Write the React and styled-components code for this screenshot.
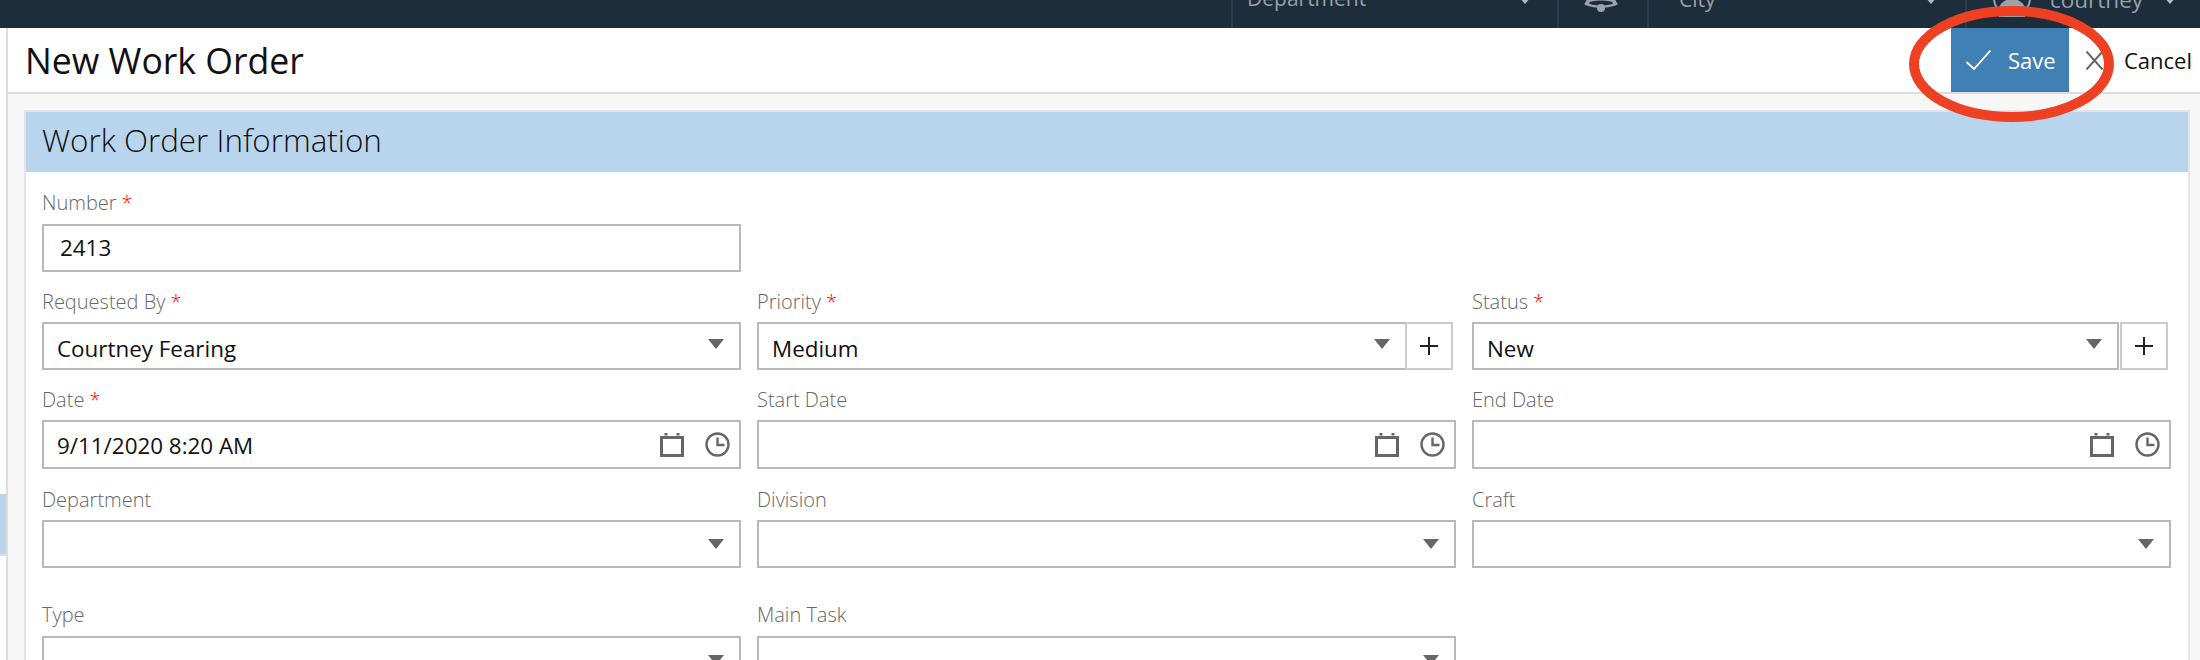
import React from "react";
import styled, { createGlobalStyle } from "styled-components";

const Global = createGlobalStyle`
  html, body { margin: 0; padding: 0; height: 660px; overflow: hidden; background: #f7f7f7; }
  body { font-family: "Open Sans", "Liberation Sans", sans-serif; }
  * { box-sizing: border-box; }
`;

const Page = styled.div`
  position: relative;
  width: 2200px;
  height: 660px;
  overflow: hidden;
  display: flex;
  flex-direction: column;
`;

const TopBar = styled.header`
  height: 28px;
  flex: none;
  background: #1e2d3b;
  overflow: hidden;
`;

const TopRow = styled.div`
  display: flex;
  justify-content: flex-end;
  height: 60px;
  margin-top: -32px;
`;

const TopCell = styled.div`
  width: ${(p) => p.$w}px;
  padding-left: ${(p) => p.$pad}px;
  border-left: 2px solid #2a3b4b;
  display: flex;
  align-items: center;
  color: #98a1a9;
  font-size: ${(p) => p.$fs || 21}px;
  position: relative;
`;

const TopText = styled.span`
  line-height: 28px;
  margin-top: ${(p) => p.$mt || 0}px;
`;

const TopCaret = styled.span`
  margin-left: auto;
  margin-right: ${(p) => p.$mr}px;
  margin-top: 4px;
  width: 0;
  height: 0;
  border-left: 6px solid transparent;
  border-right: 6px solid transparent;
  border-top: 7px solid #b5bbc1;
`;

const BellIcon = styled.svg`
  display: block;
  margin-top: 14px;
`;

const AvatarIcon = styled.svg`
  display: block;
  margin-right: 19px;
  margin-top: 0;
`;

const Body = styled.div`
  flex: 1;
  display: flex;
  min-height: 0;
`;

const Rail = styled.aside`
  width: 8px;
  flex: none;
  background: #fff;
  border-right: 2px solid #ddd;
  padding-top: 466px;
`;

const RailMark = styled.div`
  height: 62px;
  background: #b9d5ee;
  border-bottom: 2px solid #ddd;
`;

const Main = styled.main`
  flex: 1;
  min-width: 0;
  display: flex;
  flex-direction: column;
`;

const PageHead = styled.div`
  height: 66px;
  flex: none;
  background: #fff;
  border-bottom: 2px solid #ddd;
  padding: 0 8px 0 17px;
  display: flex;
  align-items: stretch;
`;

const PageTitle = styled.h1`
  margin: 0;
  flex: 1;
  font-size: 35.6px;
  font-weight: 400;
  line-height: 64px;
  color: #111;
`;

const SaveButton = styled.button`
  width: 118px;
  height: 64px;
  border: 0;
  padding: 0 0 0 15px;
  background: #4080b5;
  color: #fff;
  font: 400 22px "Open Sans", sans-serif;
  display: flex;
  align-items: center;
  gap: 17px;
`;

const CancelButton = styled.button`
  height: 64px;
  border: 0;
  padding: 0 0 0 17px;
  background: transparent;
  color: #111;
  font: 400 22px "Open Sans", sans-serif;
  display: flex;
  align-items: center;
  gap: 21px;
`;

const Content = styled.div`
  flex: 1;
  min-height: 0;
  padding: 16px 10px 0 16px;
  background: #f7f7f7;
`;

const Panel = styled.section`
  height: 100%;
  background: #fff;
  border: 2px solid #e3e3ea;
  border-bottom: 0;
`;

const PanelHead = styled.h2`
  margin: 0;
  height: 60px;
  background: #b9d5ee;
  padding-left: 16px;
  font-size: 31.4px;
  font-weight: 300;
  line-height: 56px;
  color: #111;
`;

const Form = styled.div`
  padding: 2px 15px 0 16px;
`;

const Row = styled.div`
  display: grid;
  grid-template-columns: repeat(3, 699px);
  column-gap: 16px;
  margin-bottom: ${(p) => p.$mb || 0}px;
`;

const Field = styled.div`
  min-width: 0;
`;

const Label = styled.label`
  display: block;
  height: 50px;
  padding-top: ${(p) => p.$pt || 16}px;
  font-size: 20px;
  font-weight: 300;
  line-height: 27px;
  color: #666;
`;

const Req = styled.span`
  color: #f00;
  margin-left: 5px;
`;

const Box = styled.div`
  height: ${(p) => p.$h || 48}px;
  flex: 1;
  min-width: 0;
  border: 2px solid #b9b9b9;
  background: #fff;
  display: flex;
  align-items: ${(p) => (p.$select ? "flex-start" : "center")};
  padding: 0 ${(p) => p.$pr ?? 15}px 0 ${(p) => p.$pl ?? 13}px;
  font-size: 22.4px;
  color: #111;
`;

const Value = styled.span`
  line-height: 30px;
  margin-top: ${(p) => p.$mt || 0}px;
  white-space: nowrap;
`;

const Caret = styled.span`
  margin: ${(p) => p.$mt}px 0 0 auto;
  width: 0;
  height: 0;
  flex: none;
  border-left: 8px solid transparent;
  border-right: 8px solid transparent;
  border-top: 10px solid #666;
`;

const Group = styled.div`
  display: flex;
  width: ${(p) => p.$w}px;
  gap: ${(p) => p.$gap || 0}px;
`;

const PlusBox = styled.div`
  width: 48px;
  height: 48px;
  flex: none;
  margin-left: -2px;
  border: 2px solid #cbcbcb;
  background: #fff;
  display: flex;
  align-items: center;
  justify-content: center;
`;

const DateIcons = styled.div`
  margin-left: auto;
  display: flex;
  align-items: center;
  gap: 21px;
`;

const Ring = styled.svg`
  position: absolute;
  left: 1909px;
  top: 6px;
  pointer-events: none;
`;

const Calendar = () => (
  <svg width="24" height="24" viewBox="0 0 24 24" fill="none">
    <rect x="1.5" y="4.5" width="21" height="18" stroke="#666" strokeWidth="3" />
    <path d="M6 0v2.5M18 0v2.5" stroke="#666" strokeWidth="3" />
  </svg>
);

const Clock = () => (
  <svg width="25" height="25" viewBox="0 0 25 25" fill="none" stroke="#666" strokeWidth="2.4">
    <circle cx="12.5" cy="12.5" r="11" />
    <path d="M12.5 5.5v7.5h7" />
  </svg>
);

const Plus = () => (
  <svg width="18" height="18" viewBox="0 0 18 18" stroke="#222" strokeWidth="2">
    <path d="M9 0v18M0 9h18" />
  </svg>
);

const Req2 = () => <Req>*</Req>;

const SelectEmpty = () => (
  <Box $select>
    <Caret $mt={17} />
  </Box>
);

const SelectValue = ({ value, pr }) => (
  <Box $select $pr={pr}>
    <Value $mt={10}>{value}</Value>
    <Caret $mt={15} />
  </Box>
);

const DateBox = ({ value }) => (
  <Box $h={49} $pr={9}>
    <Value $mt={2}>{value}</Value>
    <DateIcons>
      <Calendar />
      <Clock />
    </DateIcons>
  </Box>
);

export default function App() {
  return (
    <Page>
      <Global />
      <TopBar>
        <TopRow>
          <TopCell $w={326} $pad={14}>
            <TopText>Department</TopText>
            <TopCaret $mr={26} />
          </TopCell>
          <TopCell $w={90} $pad={24}>
            <BellIcon width="36" height="22" viewBox="0 0 36 22" fill="none">
              <path d="M5 0 C4 6 3 8 1 10 C8 15 28 15 35 10 C33 8 32 6 31 0Z" fill="#9aa3ab" />
              <ellipse cx="18" cy="9" rx="12" ry="2.6" fill="#1e2d3b" />
              <circle cx="18" cy="14" r="4" fill="#9aa3ab" />
            </BellIcon>
          </TopCell>
          <TopCell $w={318} $pad={30}>
            <TopText $mt={1}>City</TopText>
            <TopCaret $mr={28} />
          </TopCell>
          <TopCell $w={235} $pad={26} $fs={22.5}>
            <AvatarIcon width="38" height="38" viewBox="0 0 38 38" fill="none">
              <circle cx="19" cy="19" r="18" stroke="#9aa3ab" strokeWidth="2" />
              <ellipse cx="19" cy="33" rx="14" ry="13" fill="#9aa3ab" />
            </AvatarIcon>
            <TopText $mt={3}>courtney</TopText>
            <TopCaret $mr={24} />
          </TopCell>
        </TopRow>
      </TopBar>
      <Body>
        <Rail>
          <RailMark />
        </Rail>
        <Main>
          <PageHead>
            <PageTitle>New Work Order</PageTitle>
            <SaveButton>
              <svg width="25" height="20" viewBox="0 0 25 20" fill="none" stroke="#fff" strokeWidth="1.8">
                <path d="M0.5 12 L8 19 L24.5 0.5" />
              </svg>
              Save
            </SaveButton>
            <CancelButton>
              <svg width="17" height="19" viewBox="0 0 17 19" fill="none" stroke="#666" strokeWidth="2">
                <path d="M0.5 0.5 L16.5 18.5 M16.5 0.5 L0.5 18.5" />
              </svg>
              Cancel
            </CancelButton>
          </PageHead>
          <Content>
            <Panel>
              <PanelHead>Work Order Information</PanelHead>
              <Form>
                <Row>
                  <Field>
                    <Label $pt={15}>Number<Req2 /></Label>
                    <Box $pl={16}><Value $mt={-1}>2413</Value></Box>
                  </Field>
                </Row>
                <Row>
                  <Field>
                    <Label>Requested By<Req2 /></Label>
                    <SelectValue value="Courtney Fearing" />
                  </Field>
                  <Field>
                    <Label>Priority<Req2 /></Label>
                    <Group $w={696}>
                      <SelectValue value="Medium" />
                      <PlusBox><Plus /></PlusBox>
                    </Group>
                  </Field>
                  <Field>
                    <Label>Status<Req2 /></Label>
                    <Group $w={696} $gap={3}>
                      <SelectValue value="New" />
                      <PlusBox><Plus /></PlusBox>
                    </Group>
                  </Field>
                </Row>
                <Row $mb={1}>
                  <Field>
                    <Label>Date<Req2 /></Label>
                    <DateBox value="9/11/2020 8:20 AM" />
                  </Field>
                  <Field>
                    <Label>Start Date</Label>
                    <DateBox />
                  </Field>
                  <Field>
                    <Label>End Date</Label>
                    <DateBox />
                  </Field>
                </Row>
                <Row $mb={18}>
                  <Field>
                    <Label>Department</Label>
                    <SelectEmpty />
                  </Field>
                  <Field>
                    <Label>Division</Label>
                    <SelectEmpty />
                  </Field>
                  <Field>
                    <Label>Craft</Label>
                    <SelectEmpty />
                  </Field>
                </Row>
                <Row>
                  <Field>
                    <Label $pt={15}>Type</Label>
                    <SelectEmpty />
                  </Field>
                  <Field>
                    <Label $pt={15}>Main Task</Label>
                    <SelectEmpty />
                  </Field>
                </Row>
              </Form>
            </Panel>
          </Content>
        </Main>
      </Body>
      <Ring width="205" height="116" viewBox="0 0 205 116" fill="none">
        <ellipse cx="102.5" cy="58" rx="97.5" ry="53" stroke="#ee4023" strokeWidth="10" />
      </Ring>
    </Page>
  );
}
